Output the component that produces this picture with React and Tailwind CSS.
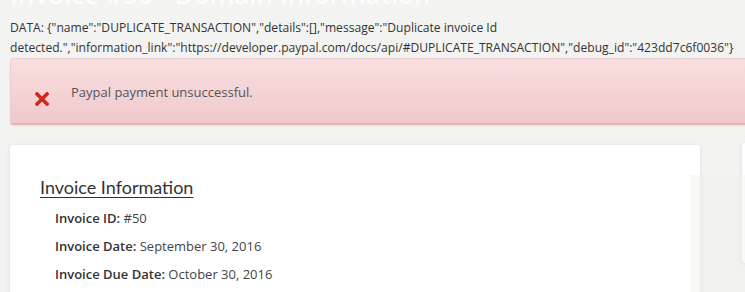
export default function App() {
  return (
    <div className="relative h-[292px] w-[745px] overflow-hidden bg-[#f3f3f1]">
      <div className="px-[10px]">
        {/* page title, mostly scrolled off */}
        <h1 className="-mt-[19px] h-[26px] whitespace-nowrap text-[26px] font-semibold leading-[26px] text-white/80 [font-family:'Open_Sans',sans-serif]">
          Invoice #50 - Domain Information
        </h1>

        <p className="mt-[11px] w-[735px] break-words text-[12.1px] leading-[20px] text-[#333] [font-stretch:90%] [font-family:'Open_Sans',sans-serif]">
          DATA: {'{"name":"DUPLICATE_TRANSACTION","details":[],"message":"Duplicate invoice Id detected.","information_link":"https://developer.paypal.com/docs/api/#DUPLICATE_TRANSACTION","debug_id":"423dd7c6f0036"}'}
        </p>

        {/* error alert */}
        <div className="-mr-[20px] flex h-[67px] items-start rounded-[3px] border border-b-2 border-[#ebd0d2] border-b-[#e6b4b8] bg-gradient-to-b from-[#fadedf] to-[#efc9cc] pl-[24px] pt-[24px] shadow-[0_1px_2px_rgba(0,0,0,0.08)]">
          <svg width="14" height="14" viewBox="0 0 14 14" className="mt-[9px]">
            <path d="M2 2 L12 12 M12 2 L2 12" stroke="#d0281e" strokeWidth="3.6" strokeLinecap="square" />
          </svg>
          <span className="ml-[22px] text-[13px] leading-[18px] text-[#555] [font-family:'Open_Sans',sans-serif]">
            Paypal payment unsuccessful.
          </span>
        </div>

        <div className="mt-[20px] flex gap-[42px]">
          {/* invoice card */}
          <div className="h-[160px] w-[690px] shrink-0 rounded-[3px] bg-white px-[30px] pt-[31px] shadow-[0_1px_4px_rgba(0,0,0,0.1)]">
            <h2 className="inline-block text-[18px] leading-[22px] text-[#333] underline decoration-1 underline-offset-[3px] [font-family:'Lato',sans-serif]">
              Invoice Information
            </h2>
            <div className="mt-[9px] space-y-[9px] pl-[15px] text-[13px] leading-[19px] text-[#444] [font-family:'Open_Sans',sans-serif]">
              <p><b className="font-semibold text-[#333]">Invoice ID:</b> #50</p>
              <p><b className="font-semibold text-[#333]">Invoice Date:</b> September 30, 2016</p>
              <p><b className="font-semibold text-[#333]">Invoice Due Date:</b> October 30, 2016</p>
            </div>
          </div>
          {/* side card peeking in */}
          <div className="mt-[-2px] h-[120px] w-[40px] shrink-0 rounded-[3px] bg-white shadow-[0_1px_4px_rgba(0,0,0,0.1)]" />
        </div>
      </div>

      {/* faint overlay on the right */}
      <div className="absolute left-[690px] top-[175px] h-[120px] w-[60px] bg-[#eeeeec]/40" />
    </div>
  );
}
